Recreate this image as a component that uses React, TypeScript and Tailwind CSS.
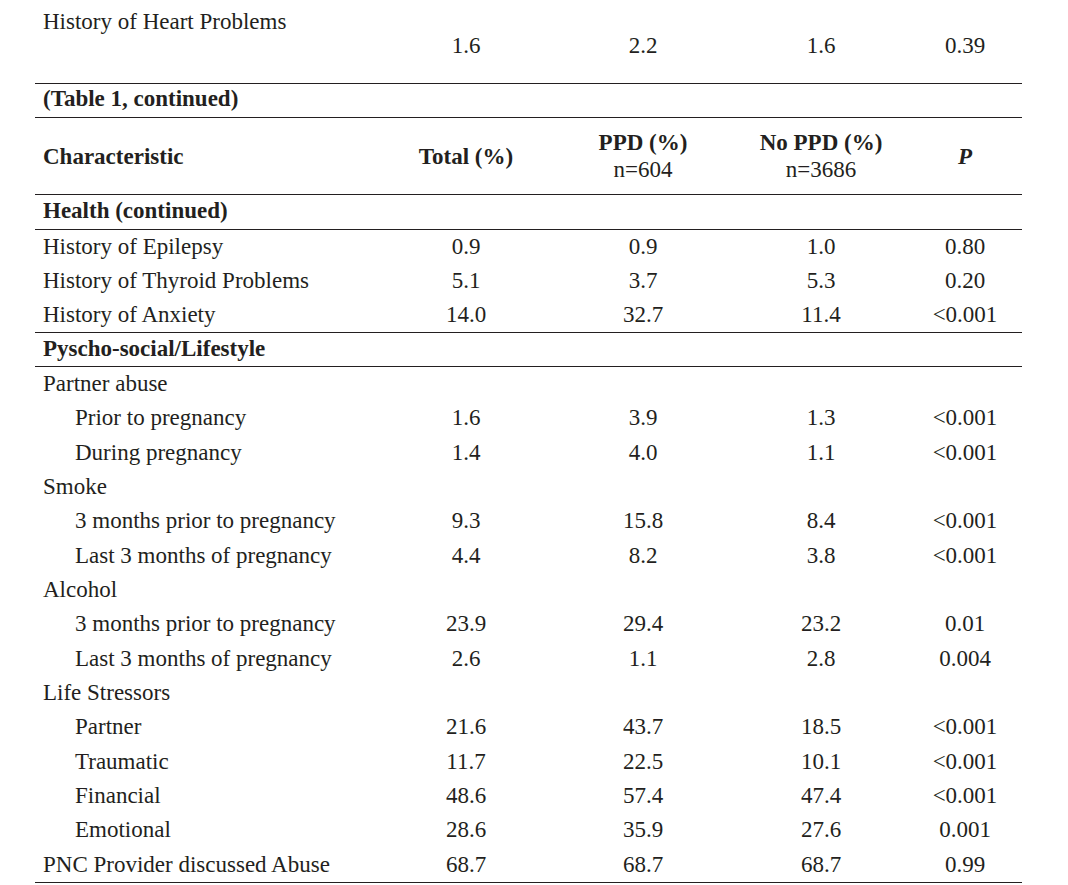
import React from 'react';

type Row = {
  label: string;
  values?: [string, string, string, string];
  indent?: boolean;
};

const healthRows: Row[] = [
  { label: 'History of Epilepsy', values: ['0.9', '0.9', '1.0', '0.80'] },
  { label: 'History of Thyroid Problems', values: ['5.1', '3.7', '5.3', '0.20'] },
  { label: 'History of Anxiety', values: ['14.0', '32.7', '11.4', '<0.001'] },
];

const lifestyleRows: Row[] = [
  { label: 'Partner abuse' },
  { label: 'Prior to pregnancy', values: ['1.6', '3.9', '1.3', '<0.001'], indent: true },
  { label: 'During pregnancy', values: ['1.4', '4.0', '1.1', '<0.001'], indent: true },
  { label: 'Smoke' },
  { label: '3 months prior to pregnancy', values: ['9.3', '15.8', '8.4', '<0.001'], indent: true },
  { label: 'Last 3 months of pregnancy', values: ['4.4', '8.2', '3.8', '<0.001'], indent: true },
  { label: 'Alcohol' },
  { label: '3 months prior to pregnancy', values: ['23.9', '29.4', '23.2', '0.01'], indent: true },
  { label: 'Last 3 months of pregnancy', values: ['2.6', '1.1', '2.8', '0.004'], indent: true },
  { label: 'Life Stressors' },
  { label: 'Partner', values: ['21.6', '43.7', '18.5', '<0.001'], indent: true },
  { label: 'Traumatic', values: ['11.7', '22.5', '10.1', '<0.001'], indent: true },
  { label: 'Financial', values: ['48.6', '57.4', '47.4', '<0.001'], indent: true },
  { label: 'Emotional', values: ['28.6', '35.9', '27.6', '0.001'], indent: true },
  { label: 'PNC Provider discussed Abuse', values: ['68.7', '68.7', '68.7', '0.99'] },
];

const Rule = () => <div className="h-px bg-[#231f20]" />;

const Cells = ({ values }: { values?: [string, string, string, string] }) => (
  <>
    <div className="w-[172px] text-center">{values?.[0]}</div>
    <div className="w-[182px] text-center">{values?.[1]}</div>
    <div className="w-[174px] text-center">{values?.[2]}</div>
    <div className="w-[114px] text-center">{values?.[3]}</div>
  </>
);

const DataRow = ({ row, height }: { row: Row; height: string }) => (
  <div className={`flex items-center ${height}`}>
    <div className={`w-[345px] ${row.indent ? 'pl-10' : 'pl-2'}`}>{row.label}</div>
    <Cells values={row.values} />
  </div>
);

export default function App() {
  return (
    <div className="min-h-[885px] bg-white text-[#231f20] text-[23px] leading-[24px] font-['Liberation_Serif',serif]">
      <div className="ml-[35px] w-[987px]">
        <div className="h-[83px] pt-[10px]">
          <div className="pl-2">History of Heart Problems</div>
          <div className="flex">
            <div className="w-[345px]" />
            <Cells values={['1.6', '2.2', '1.6', '0.39']} />
          </div>
        </div>
        <Rule />
        <div className="flex items-center h-[33px] pl-2 pb-[3px] font-bold">(Table 1, continued)</div>
        <Rule />
        <div className="flex items-center h-[76px] font-bold leading-[27px]">
          <div className="w-[345px] pl-2">Characteristic</div>
          <div className="w-[172px] text-center">Total (%)</div>
          <div className="w-[182px] text-center">
            PPD (%)
            <div className="font-normal">n=604</div>
          </div>
          <div className="w-[174px] text-center">
            No PPD (%)
            <div className="font-normal">n=3686</div>
          </div>
          <div className="w-[114px] text-center italic">P</div>
        </div>
        <Rule />
        <div className="flex items-center h-[34px] pl-2 pb-[2px] font-bold">Health (continued)</div>
        <Rule />
        {healthRows.map((r, i) => (
          <DataRow key={i} row={r} height="h-[34px]" />
        ))}
        <Rule />
        <div className="flex items-center h-[33px] pl-2 pb-[2px] font-bold">Pyscho-social/Lifestyle</div>
        <Rule />
        {lifestyleRows.map((r, i) => (
          <DataRow key={i} row={r} height="h-[34.33px]" />
        ))}
        <Rule />
      </div>
    </div>
  );
}
